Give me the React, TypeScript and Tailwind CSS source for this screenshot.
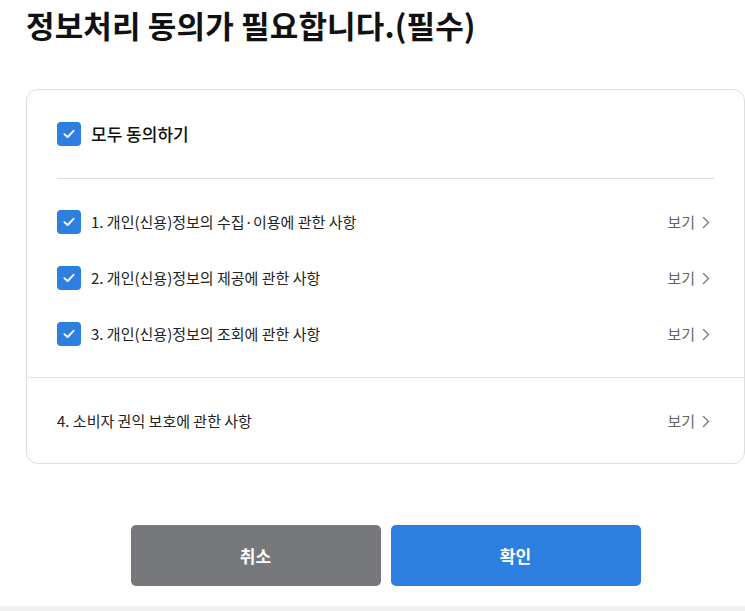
import React from "react";

const font = { fontFamily: '"Noto Sans CJK KR", "Noto Sans", sans-serif' };

function Check() {
  return (
    <div className="flex h-[24px] w-[24px] shrink-0 items-center justify-center rounded-[4px] bg-[#2d7fe0]">
      <svg width="14" height="14" viewBox="0 0 14 14" fill="none">
        <path d="M2.5 7.2 L5.6 10.1 L11.5 3.9" stroke="white" strokeWidth="2" strokeLinecap="round" strokeLinejoin="round" />
      </svg>
    </div>
  );
}

function View() {
  return (
    <div className="mr-[4px] flex items-center gap-[7px] text-[15px] text-[#666]">
      <span>보기</span>
      <svg width="8" height="13" viewBox="0 0 8 13" fill="none">
        <path d="M1.5 1.5 L6.5 6.5 L1.5 11.5" stroke="#777" strokeWidth="1.3" strokeLinecap="round" strokeLinejoin="round" />
      </svg>
    </div>
  );
}

function Item({ label, checked = true }: { label: string; checked?: boolean }) {
  return (
    <div className="flex h-[24px] items-center justify-between">
      <div className="flex items-center gap-[10px]">
        {checked && <Check />}
        <span className="text-[15px] text-[#222]">{label}</span>
      </div>
      <View />
    </div>
  );
}

export default function App() {
  return (
    <div className="min-h-screen bg-white flex flex-col" style={font}>
      <div className="pl-[26px]">
        <h1 className="pt-[1px] text-[31px] font-bold leading-[48px] tracking-[0.15px] text-[#111]">
          정보처리 동의가 필요합니다.(필수)
        </h1>
        <div className="mt-[40px] rounded-[12px] border border-[#dedede]">
          <div className="px-[30px] pt-[32px]">
            <div className="flex h-[24px] items-center gap-[10px]">
              <Check />
              <span className="text-[17px] font-medium text-[#111]">모두 동의하기</span>
            </div>
            <div className="mt-[32px] h-px bg-[#dedede]" />
            <div className="flex flex-col gap-[32px] py-[31px]">
              <Item label="1. 개인(신용)정보의 수집·이용에 관한 사항" />
              <Item label="2. 개인(신용)정보의 제공에 관한 사항" />
              <Item label="3. 개인(신용)정보의 조회에 관한 사항" />
            </div>
          </div>
          <div className="h-px bg-[#e6e6e6]" />
          <div className="px-[30px] pt-[31px] pb-[30px]">
            <Item label="4. 소비자 권익 보호에 관한 사항" checked={false} />
          </div>
        </div>
        <div className="mt-[61px] flex justify-center gap-[10px]">
          <button className="h-[61px] w-[250px] rounded-[5px] bg-[#77787b] text-[17px] font-bold text-white">취소</button>
          <button className="h-[61px] w-[250px] rounded-[5px] bg-[#2d7fe0] text-[17px] font-bold text-white">확인</button>
        </div>
      </div>
      <div className="mt-[20px] h-[8px] bg-[#f0f0f0]" />
    </div>
  );
}
